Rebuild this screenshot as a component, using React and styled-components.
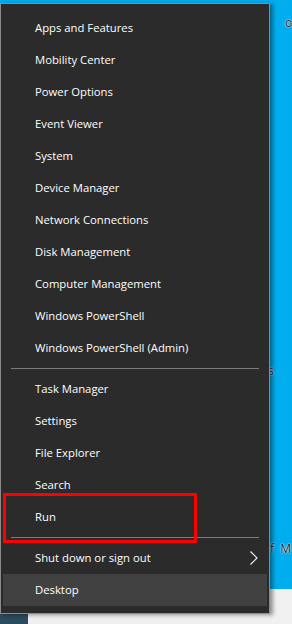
import React from "react";
import styled, { createGlobalStyle } from "styled-components";

const GlobalStyle = createGlobalStyle`
  html, body {
    margin: 0;
    padding: 0;
    background: #00adef;
  }
  * {
    box-sizing: border-box;
  }
`;

const groups = [
  [
    "Apps and Features",
    "Mobility Center",
    "Power Options",
    "Event Viewer",
    "System",
    "Device Manager",
    "Network Connections",
    "Disk Management",
    "Computer Management",
    "Windows PowerShell",
    "Windows PowerShell (Admin)",
  ],
  ["Task Manager", "Settings", "File Explorer", "Search", "Run"],
];

const Screen = () => {
  return (
    <Desktop>
      <GlobalStyle />
      <Wallpaper>
        <Label $top={14} $left={285}>o</Label>
        <Label $top={362} $left={268}>s</Label>
        <Label $top={540} $left={270}>f&nbsp;&nbsp;M</Label>
      </Wallpaper>
      <Tray>
        <Tile />
      </Tray>

      <Menu>
        {groups.map((items, i) => (
          <React.Fragment key={i}>
            {items.map((label) => (
              <Item key={label}>{label}</Item>
            ))}
            <Separator />
          </React.Fragment>
        ))}
        <Item>
          Shut down or sign out
          <Chevron viewBox="0 0 8 14">
            <polyline points="0.5,0.5 7,7 0.5,13.5" />
          </Chevron>
        </Item>
        <Item $active>Desktop</Item>
      </Menu>

      <Highlight />
    </Desktop>
  );
};

const Desktop = styled.div`
  position: relative;
  width: 292px;
  height: 624px;
  display: flex;
  flex-direction: column;
  overflow: hidden;
  font-family: "Open Sans", "Noto Sans", sans-serif;
`;

const Wallpaper = styled.div`
  position: relative;
  flex: 1;
  background: #00adef;
`;

const Label = styled.span`
  position: absolute;
  top: ${({ $top }) => $top}px;
  left: ${({ $left }) => $left}px;
  font-size: 12px;
  color: #1a1a1a;
  text-shadow: 0 0 2px #ffffff, 0 0 1px #ffffff;
`;

const Tray = styled.div`
  height: 35px;
  display: flex;
  align-items: flex-end;
  background: #f0f0f0;
`;

const Tile = styled.div`
  width: 28px;
  height: 11px;
  background: #2d4b5e;
`;

const Menu = styled.nav`
  position: absolute;
  top: 3px;
  left: 0;
  width: 270px;
  display: flex;
  flex-direction: column;
  padding: 8px 0 7px;
  background: #2b2b2b;
  border: 1px solid #8c8c8c;
  box-shadow: 3px 1px 4px rgba(0, 0, 0, 0.4);
`;

const Item = styled.div`
  position: relative;
  height: 32px;
  margin: 0 2px;
  padding: 0 0 2px 32px;
  display: flex;
  align-items: center;
  font-size: 11.3px;
  color: #ffffff;
  background: ${({ $active }) => ($active ? "#414141" : "transparent")};
`;

const Separator = styled.div`
  height: 1px;
  margin: 4px 10px;
  background: #7b7b7b;
`;

const Chevron = styled.svg`
  position: absolute;
  right: 9px;
  top: 9px;
  width: 8px;
  height: 14px;
  fill: none;
  stroke: #e8f2ff;
  stroke-width: 1.2;
`;

const Highlight = styled.div`
  position: absolute;
  top: 493px;
  left: 3px;
  width: 194px;
  height: 50px;
  border: 3px solid #ff0000;
`;

export default function App() {
  return <Screen />;
}
